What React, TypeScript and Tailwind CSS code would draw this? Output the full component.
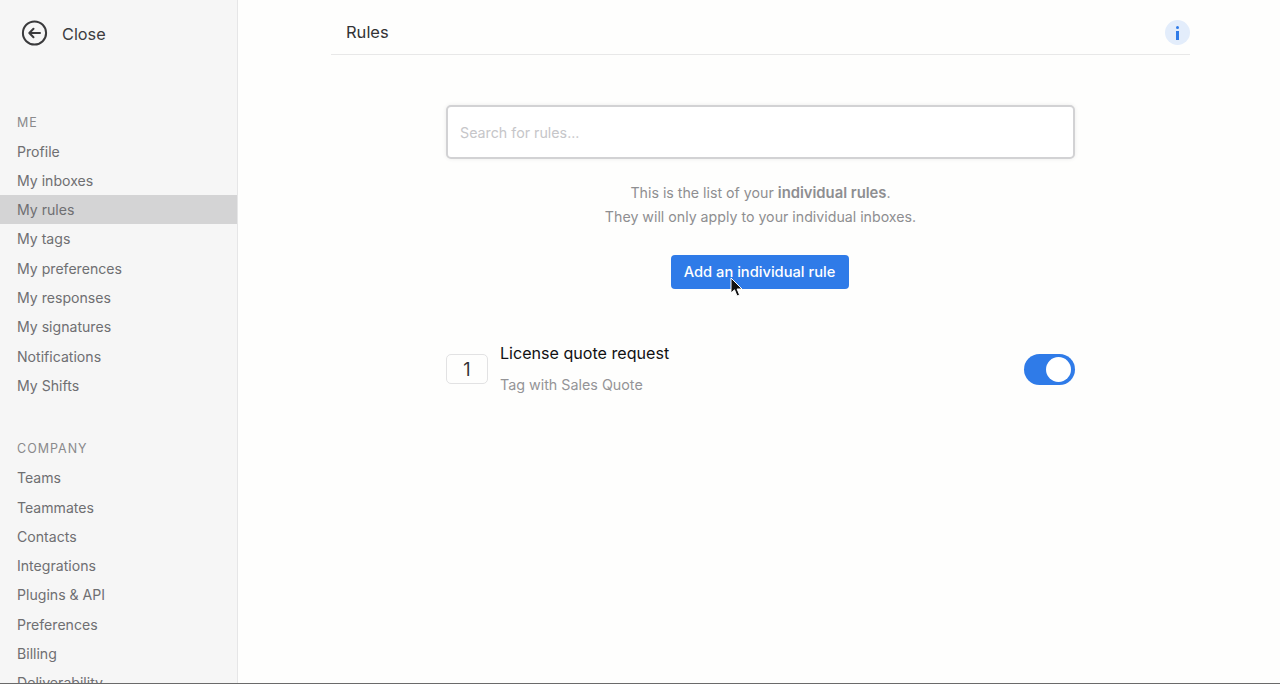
const meLinks = ["Profile", "My inboxes", "My rules", "My tags", "My preferences", "My responses", "My signatures", "Notifications", "My Shifts"];
const companyLinks = ["Teams", "Teammates", "Contacts", "Integrations", "Plugins & API", "Preferences", "Billing", "Deliverability"];

function NavSection({ title, links, active }: { title: string; links: string[]; active?: string }) {
  return (
    <div>
      <div className="h-[29px] pl-[17px] pt-[3px] flex items-center text-[12.5px] tracking-[0.08em] text-[#8a8a8c]">{title}</div>
      {links.map((link) => (
        <div
          key={link}
          className={`h-[29.3px] pl-[17px] pt-[1px] flex items-center text-[14.1px] text-[#6f6f72] ${link === active ? "bg-[#d4d4d5]" : ""}`}
        >
          {link}
        </div>
      ))}
    </div>
  );
}

export default function App() {
  return (
    <div className="relative h-[684px] w-[1280px] overflow-hidden flex bg-[#fefefd] font-['Inter',sans-serif]">
      <aside className="w-[238px] shrink-0 h-full bg-[#f6f6f6] border-r border-[#e6e6e7] overflow-hidden">
        <div className="h-[107px] pl-[21px] pb-[40px] flex items-center gap-[14px]">
          <svg width="27" height="27" viewBox="0 0 27 27" fill="none" stroke="#3a3a3c" strokeWidth="2" strokeLinecap="round" strokeLinejoin="round">
            <circle cx="13.5" cy="13" r="11.6" />
            <path d="M19 13H8.5M12.5 8.8L8.3 13l4.2 4.2" />
          </svg>
          <span className="text-[16.3px] text-[#3d3d3f] pt-[2px]">Close</span>
        </div>
        <NavSection title="ME" links={meLinks} active="My rules" />
        <div className="h-[34px]" />
        <NavSection title="COMPANY" links={companyLinks} />
      </aside>

      <main className="flex-1 min-w-0 pl-[93px] pr-[90px]">
        <header className="h-[55px] pl-[15px] pt-[10px] border-b border-[#e8e8e8] flex items-center justify-between">
          <h1 className="text-[16.5px] font-normal text-[#333335] pt-[1px]">Rules</h1>
          <div className="w-[25px] h-[25px] mt-[1px] rounded-full bg-[#e3edfb] flex flex-col items-center justify-center gap-[2px]">
            <span className="w-[3px] h-[3px] rounded-full bg-[#2f7be8]" />
            <span className="w-[3px] h-[9px] bg-[#2f7be8]" />
          </div>
        </header>

        <div className="w-[629px] ml-[115px] mt-[50px]">
          <div className="h-[54px] rounded-[5px] border-2 border-[#d2d2d4] bg-white shadow-[0_0_4px_rgba(0,0,0,0.08)] pl-[12px] pt-[2px] flex items-center text-[14.25px] text-[#c6c6c9]">
            Search for rules...
          </div>

          <p className="mt-[22px] text-center text-[14.2px] leading-[24px] text-[#8e8e91]">
            This is the list of your <strong className="font-semibold text-[14.8px]">individual rules</strong>.
            <br />
            They will only apply to your individual inboxes.
          </p>

          <div className="mt-[26px] flex justify-center">
            <button className="w-[178px] h-[34px] mr-[2px] rounded-[4px] bg-[#2f7be8] text-white text-[14.7px] font-medium">
              Add an individual rule
            </button>
          </div>

          <div className="mt-[53px] flex items-center">
            <div className="w-[42px] h-[30px] mb-[1px] rounded-[5px] border border-[#e2e2e3] flex items-center justify-center text-[18px] text-[#333335]">
              1
            </div>
            <div className="ml-[12px] flex-1 -mt-[1px]">
              <div className="text-[16.1px] leading-[24px] text-[#111113] font-normal">License quote request</div>
              <div className="mt-[8px] text-[14.3px] leading-[24px] text-[#949497]">Tag with Sales Quote</div>
            </div>
            <div className="w-[51px] h-[31px] rounded-full bg-[#2f7be8] flex items-center justify-end pr-[4px]">
              <span className="w-[25px] h-[25px] rounded-full bg-white" />
            </div>
          </div>
        </div>
      </main>

      {/* mouse cursor + bottom edge of the capture */}
      <svg className="absolute left-[729px] top-[277px]" width="14" height="21" viewBox="0 0 14 21">
        <path d="M2 1v15l3.5-3.2L8 19l2.6-1.1-2.5-5.9H13z" fill="#111" stroke="#fff" strokeWidth="1" />
      </svg>
      <div className="absolute left-0 right-0 bottom-0 h-px bg-[#6a6a6a]" />
    </div>
  );
}
